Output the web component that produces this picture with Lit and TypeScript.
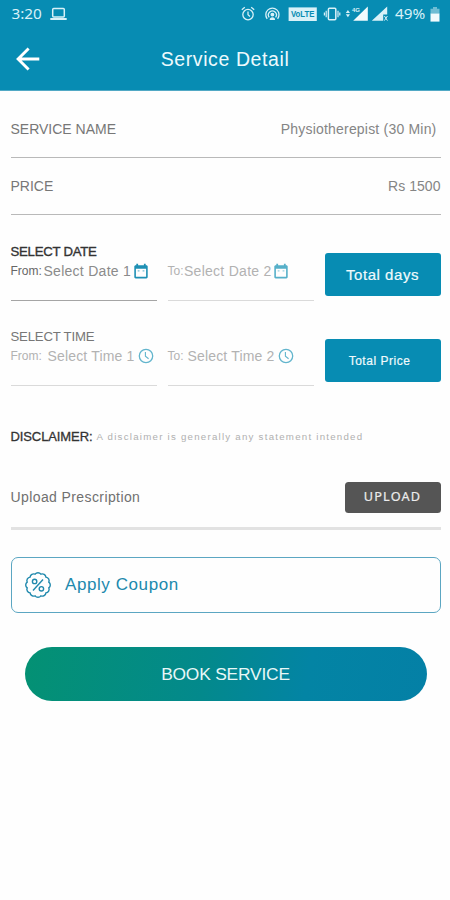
import { LitElement, html, css, svg } from "lit";
import { customElement } from "lit/decorators.js";

const calendar = html`<svg class="cal" viewBox="0 0 14 16">
  <path fill="currentColor" fill-rule="evenodd" d="M2.3 .8h1.8v1.4h5.8V.8h1.8v1.4h.6c.8 0 1.4.6 1.4 1.4v10.4c0 .8-.6 1.4-1.4 1.4H1.7c-.8 0-1.4-.6-1.4-1.4V3.6c0-.8.6-1.4 1.4-1.4h.6zM1.9 5.8v8h10.2v-8z"/>
  <path fill="currentColor" d="M3.7 7.2h1.8v1.4H3.7zM8.6 7.2h1.8v1.4H8.6z" opacity=".6"/></svg>`;

const clock = html`<svg class="clock" viewBox="0 0 16 16" fill="none" stroke="currentColor">
  <circle cx="8" cy="8" r="6.7" stroke-width="1.3"/><path d="M7.4 4v4.2l3.2 2.6" stroke-width="1.1"/></svg>`;

function scallop(): string {
  const n = 12;
  const pts: string[] = [];
  for (let i = 0; i <= n; i++) {
    const a = (i / n) * Math.PI * 2 - Math.PI / 2 + Math.PI / n;
    const x = (14 + 11.2 * Math.cos(a)).toFixed(2);
    const y = (14 + 11.2 * Math.sin(a)).toFixed(2);
    pts.push(i === 0 ? `M${x} ${y}` : `A3.6 3.6 0 0 1 ${x} ${y}`);
  }
  return pts.join("") + "Z";
}

@customElement("status-bar")
class StatusBar extends LitElement {
  static styles = css`
    :host { display: flex; align-items: center; height: 28px; padding: 0 10px 0 11.5px; color: #d9f1f8;
      font: 15.3px/26px "Noto Sans", sans-serif; box-sizing: border-box; }
    svg { display: block; overflow: visible; flex: none; }
    span { padding-bottom: 2px; }
    .laptop { margin-left: 8px; }
    .icons { margin-left: auto; }
    .pct { margin-left: 6px; letter-spacing: -0.1px; }
    .batt { margin-left: 5px; }
    .volte { font: bold 8.5px "Liberation Sans", sans-serif; }
    .tiny { font: bold 6px "Liberation Sans", sans-serif; }
  `;
  render() {
    return html`
      <span>3:20</span>
      <svg class="laptop" width="17" height="14" viewBox="0 0 17 14">
        <rect x="2.7" y="1.4" width="11.6" height="8.6" rx="1" fill="none" stroke="currentColor" stroke-width="1.5"/>
        <path d="M.3 11h16.4v2H.3z" fill="currentColor"/></svg>
      <svg class="icons" width="148" height="16" viewBox="241 6 148 16" fill="none" stroke="currentColor" stroke-width="1.3">
        <circle cx="248" cy="14.6" r="5.2"/><path d="M248 11.5v3.3l2 1.6M241.8 9.8l3-2.5M254.2 9.8l-3-2.5"/>
        <path d="M267.2 18.8a6.6 6.6 0 1 1 10.4 0M269.2 17.4a4 4 0 1 1 6.4 0"/>
        <circle cx="272.4" cy="14.6" r="1.3" fill="currentColor"/><path d="M269.7 20a2.7 2.7 0 0 1 5.4 0z" fill="currentColor" stroke="none"/>
        <rect x="288.6" y="7.4" width="28.2" height="13.6" fill="currentColor" stroke="none"/>
        <text class="volte" x="291" y="17.4" textLength="23.5" lengthAdjust="spacingAndGlyphs" fill="#078cb3" stroke="none">VoLTE</text>
        <rect x="328.4" y="8.2" width="7.4" height="11.6" rx="1" stroke-width="1.5"/><path d="M326.2 10.8v6.4M338 10.8v6.4M324.4 12.4v3.2M339.8 12.4v3.2" stroke-width="1.2"/>
        <path d="M345.8 13l2.1-3 2.1 3zM345.8 14.2l2.1 3 2.1-3z" fill="currentColor" stroke="none"/>
        <path d="M367.8 6.4v14.4h-14.6z" fill="#f2fbfd" stroke="none"/>
        <text class="tiny" x="352" y="11.6" fill="currentColor" stroke="#078cb3" stroke-width="1.4" paint-order="stroke">4G</text>
        <path d="M387.2 6.4v8h-4v6.4h-11.4z" fill="currentColor" stroke="none"/>
        <path d="M384.4 16l3 4.6M387.4 16l-3 4.6" stroke-width="1"/>
      </svg>
      <span class="pct">49%</span>
      <svg class="batt" width="10" height="15" viewBox="0 0 10 15">
        <path d="M3 0h4v1.8h2.5V7H.5V1.8H3z" fill="#6fbdd4"/><path d="M.5 6.6h9V14.6H.5z" fill="#f2fbfd"/></svg>
    `;
  }
}

@customElement("app-root")
class AppRoot extends LitElement {
  static styles = css`
    :host { display: block; width: 450px; height: 900px; background: #fefefe; overflow: hidden;
      font-family: "Liberation Sans", Arial, sans-serif; color: #777; }
    * { box-sizing: border-box; }
    svg { display: block; flex: none; }
    .head { height: 91px; background: #078cb3; border-bottom: 1px solid #52a9c5; }
    .bar { display: grid; grid-template-columns: 60px 1fr 60px; align-items: center; height: 62px; color: #eefafd; }
    .back { margin-left: 16px; }
    .title { text-align: center; font-size: 19.5px; line-height: 24px; letter-spacing: 0.6px; }
    .main { padding: 0 9.5px 0 10.5px; }
    .row { display: flex; justify-content: space-between; height: 57px; line-height: 20px; font-size: 14px;
      border-bottom: 1.5px solid #b9b9b9; padding-top: 18px; }
    .row.first { height: 67px; padding-top: 28px; }
    .val { letter-spacing: 0.2px; color: #858585; }
    .val.name { padding-right: 4px; }
    .val.price { letter-spacing: 0.05px; }
    .grid { display: grid; grid-template-columns: 146px 146px 116px; column-gap: 11px; }
    .dates { margin-top: 26px; height: 60px; }
    .times { margin-top: 25px; height: 60px; }
    .field { display: flex; flex-direction: column; justify-content: flex-end; border-bottom: 1px solid #dadada;
      color: #b2b2b2; }
    .field.on { border-color: #a5a5a5; color: #8b8b8b; }
    .label { font-size: 13.2px; line-height: 18px; letter-spacing: -0.2px; color: #777; }
    .on .label { color: #333; -webkit-text-stroke: 0.35px #333; letter-spacing: -0.25px; }
    .pick { display: flex; align-items: center; height: 20px; margin-bottom: 19px; white-space: nowrap; }
    .pre { font-size: 12px; width: 33px; flex: none; }
    .on .pre { color: #666; }
    .to .pre { width: 16.5px; }
    .times .pre { width: 37px; }
    .times .to .pre { width: 20px; }
    .text { font-size: 14px; letter-spacing: 0.27px; }
    .times .text { letter-spacing: 0.17px; }
    .cal { width: 14px; height: 16px; margin-left: 2.5px; color: #56b0c9; }
    .on .cal { color: #1e90b4; }
    .clock { width: 16px; height: 16px; margin-left: 3.5px; color: #62b5cd; }
    .box { display: flex; align-items: center; justify-content: center; height: 43px; margin-top: 12px;
      background: #078cb3; border-radius: 3px; color: #f0fafc; font-size: 15px; letter-spacing: 0.55px; }
    .times .box { margin-top: 13px; font-size: 12px; letter-spacing: 0.52px; padding-right: 6px; }
    .box, .times .box { -webkit-text-stroke: 0.2px #f0fafc; }
    .disc { display: flex; align-items: center; margin-top: 40px; height: 20px; white-space: nowrap; }
    .disc b { font-weight: 400; font-size: 13px; color: #333; -webkit-text-stroke: 0.3px #333; letter-spacing: -0.1px; width: 86px; }
    .disc span { font-size: 9.7px; letter-spacing: 1.24px; color: #b0b0b0; }
    .upload { display: flex; justify-content: space-between; align-items: flex-start; margin-top: 36px; height: 47.5px;
      border-bottom: 3px solid #e2e2e2; font-size: 14px; letter-spacing: 0.4px; color: #707070; }
    .upload span { line-height: 30px; }
    .ubtn { width: 96px; height: 30.5px; border-radius: 3.5px; background: #555; color: #ececec; text-align: center;
      font: 12.7px/29px "Noto Sans", sans-serif; letter-spacing: 1.15px; -webkit-text-stroke: 0.2px #ececec; }
    .coupon { display: flex; align-items: center; margin-top: 27px; height: 56px; border: 1.5px solid #5ba6c2;
      border-radius: 7px; padding-left: 12px; color: #2089ad; font-size: 17px; letter-spacing: 0.58px; }
    .coupon span { margin-left: 13.5px; line-height: 20px; padding-top: 1px; }
    .book { display: flex; align-items: center; justify-content: center; margin: 34.5px 14px 0; height: 54px;
      border-radius: 27px; background: linear-gradient(100deg, #049173 0%, #03898c 45%, #0384a4 70%, #0480a6 100%);
      color: #e8f7f7; font-size: 17.4px; letter-spacing: -0.2px; }
  `;
  render() {
    return html`
      <div class="head">
        <status-bar></status-bar>
        <div class="bar">
          <svg class="back" width="24" height="24" viewBox="0 0 24 24" fill="none" stroke="#fff" stroke-width="2.9">
            <path d="M23.3 12H2.4M12.6 1.5L2.1 12l10.5 10.5"/></svg>
          <div class="title">Service Detail</div>
        </div>
      </div>
      <div class="main">
        <div class="row first"><span>SERVICE NAME</span><span class="val name">Physiotherepist (30 Min)</span></div>
        <div class="row"><span>PRICE</span><span class="val price">Rs 1500</span></div>
        <div class="grid dates">
          <div class="field on">
            <div class="label">SELECT DATE</div>
            <div class="pick"><span class="pre">From:</span><span class="text">Select Date 1</span>${calendar}</div>
          </div>
          <div class="field to">
            <div class="pick"><span class="pre">To:</span><span class="text">Select Date 2</span>${calendar}</div>
          </div>
          <div class="box">Total days</div>
        </div>
        <div class="grid times">
          <div class="field">
            <div class="label">SELECT TIME</div>
            <div class="pick"><span class="pre">From:</span><span class="text">Select Time 1</span>${clock}</div>
          </div>
          <div class="field to">
            <div class="pick"><span class="pre">To:</span><span class="text">Select Time 2</span>${clock}</div>
          </div>
          <div class="box">Total Price</div>
        </div>
        <div class="disc"><b>DISCLAIMER:</b><span>A disclaimer is generally any statement intended</span></div>
        <div class="upload"><span>Upload Prescription</span><div class="ubtn">UPLOAD</div></div>
        <div class="coupon">
          <svg width="28" height="28" viewBox="0 0 28 28" fill="none" stroke="currentColor" stroke-width="1.4">
            ${svg`<path d=${scallop()} />`}
            <circle cx="10.6" cy="10.4" r="2.2"/><circle cx="17.4" cy="17.8" r="2.2"/><path d="M19 8.6L9 19.4"/></svg>
          <span>Apply Coupon</span>
        </div>
        <div class="book">BOOK SERVICE</div>
      </div>
    `;
  }
}
